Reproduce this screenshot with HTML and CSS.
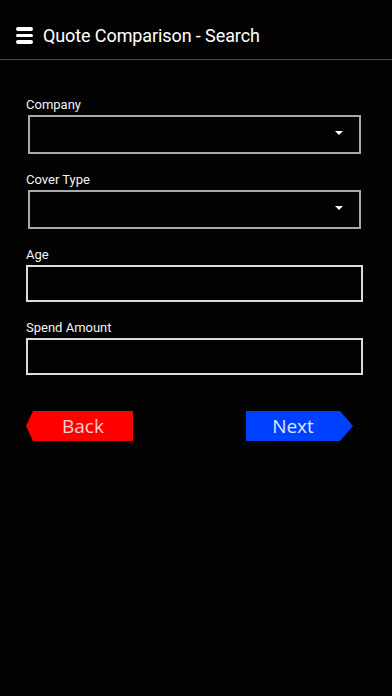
FILE: index.html
```html
<!DOCTYPE html>
<html lang="en">
<head>
    <meta charset="UTF-8">
    <meta name="viewport" content="width=device-width, initial-scale=1.0">
    <title>Quote Comparison - Search</title>
    <link rel="stylesheet" href="styles.css">
</head>
<body>
    <div class="header">
        <span class="menu-icon">
            <span></span><span></span><span></span>
        </span>
        <h1 class="title">Quote Comparison - Search</h1>
    </div>

    <form class="search-form">
        <div class="field">
            <label class="field-label">Company</label>
            <div class="select-box"><span class="caret"></span></div>
        </div>
        <div class="field">
            <label class="field-label">Cover Type</label>
            <div class="select-box"><span class="caret"></span></div>
        </div>
        <div class="field">
            <label class="field-label">Age</label>
            <input type="text" class="input-field">
        </div>
        <div class="field">
            <label class="field-label">Spend Amount</label>
            <input type="text" class="input-field">
        </div>

        <div class="button-row">
            <button type="button" class="nav-btn back-btn">Back</button>
            <button type="button" class="nav-btn next-btn">Next</button>
        </div>
    </form>
</body>
</html>
```

FILE: styles.css
```css
body {
    margin: 0;
    background-color: #030303;
    color: #fff;
    font-family: Roboto, "Liberation Sans", sans-serif;
}
.header {
    height: 60px;
    border-bottom: 1px solid #4a4a4a;
    display: flex;
    align-items: center;
    padding-left: 16px;
    padding-top: 12px;
    box-sizing: border-box;
}
.menu-icon {
    display: flex;
    flex-direction: column;
    gap: 3px;
    width: 17px;
    margin-right: 10px;
}
.menu-icon span {
    display: block;
    height: 3.5px;
    background-color: #fff;
    border-radius: 2px;
}
.title {
    margin: 0;
    font-size: 18px;
    font-weight: 400;
    line-height: 24px;
    letter-spacing: -0.1px;
}
.search-form {
    padding: 37px 0 0 26px;
}
.field {
    margin-bottom: 18px;
}
.field-label {
    display: block;
    font-size: 13px;
    line-height: 16px;
    margin-bottom: 2px;
    color: #f2f2f2;
}
.select-box {
    position: relative;
    margin-left: 2px;
    width: 333px;
    height: 39px;
    border: 2px solid #a9a9a9;
    box-sizing: border-box;
}
.caret {
    position: absolute;
    right: 16px;
    top: 14px;
    width: 0;
    height: 0;
    border-left: 4px solid transparent;
    border-right: 4px solid transparent;
    border-top: 4px solid #fff;
}
.input-field {
    display: block;
    width: 337px;
    height: 37px;
    margin: 0;
    padding: 0 8px;
    border: 2px solid #dcdcdc;
    background: transparent;
    color: #fff;
    box-sizing: border-box;
}
.button-row {
    display: flex;
    gap: 113px;
    margin-top: 36px;
}
.nav-btn {
    width: 107px;
    height: 30px;
    border: none;
    padding: 0;
    font-family: "Open Sans", "Noto Sans", sans-serif;
    font-size: 19px;
    line-height: 30px;
    cursor: pointer;
}
.back-btn {
    background-color: #ff0000;
    color: #f9d0d0;
    padding-left: 7px;
    clip-path: polygon(7px 0, 100% 0, 100% 100%, 7px 100%, 0 50%);
}
.next-btn {
    background-color: #0040ff;
    color: #dde6ff;
    padding-right: 13px;
    clip-path: polygon(0 0, 94px 0, 100% 50%, 94px 100%, 0 100%);
}
```
